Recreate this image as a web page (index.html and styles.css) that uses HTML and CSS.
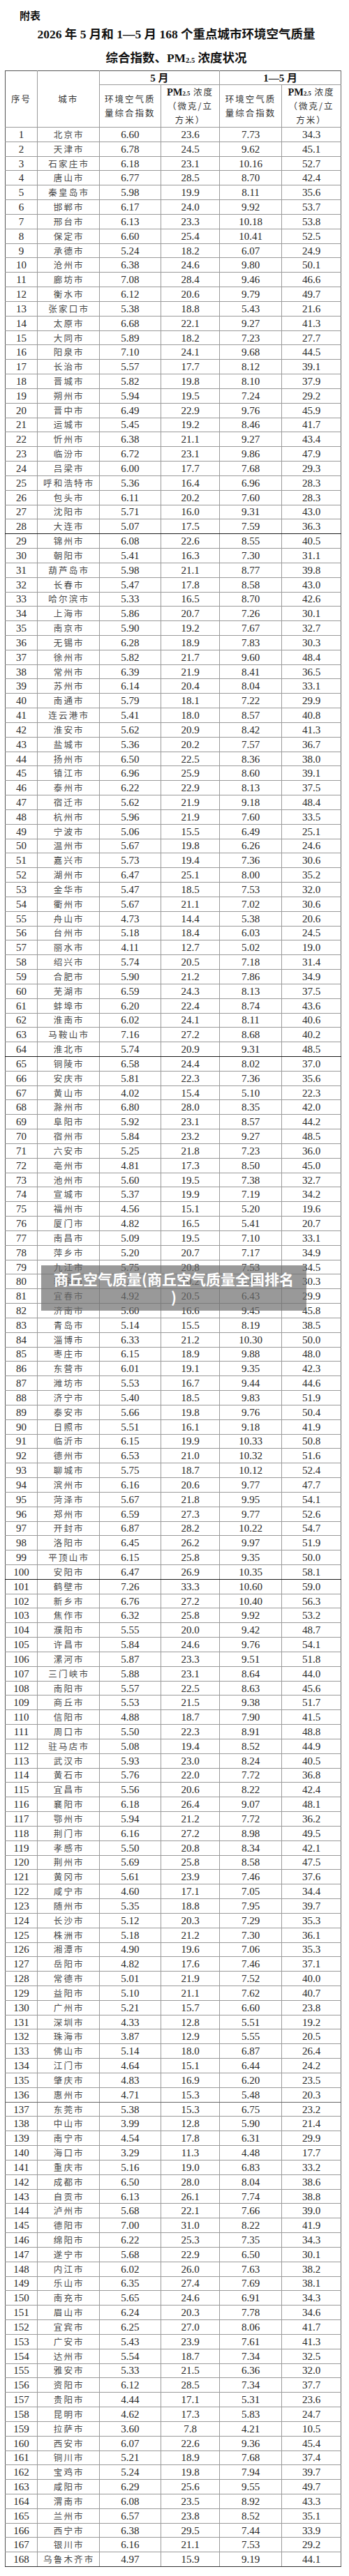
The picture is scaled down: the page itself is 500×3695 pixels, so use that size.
FILE: index.html
```html
<!DOCTYPE html>
<html lang="zh-CN">
<head>
<meta charset="utf-8">
<title>附表</title>
<link rel="stylesheet" href="styles.css">
</head>
<body>
<div class="doc">
<p class="label">附表</p>
<h1 class="title">2026 年 5 月和 1—5 月 168 个重点城市环境空气质量<br>综合指数、PM<span class="sub">2.5</span> 浓度状况</h1>
<table class="aq">
<colgroup><col class="c1"><col class="c2"><col class="c3"><col class="c4"><col class="c5"><col class="c6"></colgroup>
<thead>
<tr class="h1"><th rowspan="2" class="hz">序号</th><th rowspan="2" class="hz">城市</th><th colspan="2" class="hb">5 月</th><th colspan="2" class="hb">1—5 月</th></tr>
<tr class="h2"><th class="hz">环境空气质<br>量综合指数</th><th class="hz"><b class="pm">PM<span class="sub">2.5</span></b> 浓度<br>（微克/立<br>方米）</th><th class="hz">环境空气质<br>量综合指数</th><th class="hz"><b class="pm">PM<span class="sub">2.5</span></b> 浓度<br>（微克/立<br>方米）</th></tr>
</thead>
<tbody>
<tr><td>1</td><td class="ct">北京市</td><td>6.60</td><td>23.6</td><td>7.73</td><td>34.3</td></tr>
<tr><td>2</td><td class="ct">天津市</td><td>6.78</td><td>24.5</td><td>9.62</td><td>45.1</td></tr>
<tr><td>3</td><td class="ct">石家庄市</td><td>6.18</td><td>23.1</td><td>10.16</td><td>52.7</td></tr>
<tr><td>4</td><td class="ct">唐山市</td><td>6.77</td><td>28.5</td><td>8.70</td><td>42.4</td></tr>
<tr><td>5</td><td class="ct">秦皇岛市</td><td>5.98</td><td>19.9</td><td>8.11</td><td>35.6</td></tr>
<tr><td>6</td><td class="ct">邯郸市</td><td>6.17</td><td>24.0</td><td>9.92</td><td>53.7</td></tr>
<tr><td>7</td><td class="ct">邢台市</td><td>6.13</td><td>23.3</td><td>10.18</td><td>53.8</td></tr>
<tr><td>8</td><td class="ct">保定市</td><td>6.60</td><td>25.4</td><td>10.41</td><td>52.5</td></tr>
<tr><td>9</td><td class="ct">承德市</td><td>5.24</td><td>18.2</td><td>6.07</td><td>24.9</td></tr>
<tr><td>10</td><td class="ct">沧州市</td><td>6.38</td><td>24.6</td><td>9.80</td><td>50.1</td></tr>
<tr><td>11</td><td class="ct">廊坊市</td><td>7.08</td><td>28.4</td><td>9.46</td><td>46.6</td></tr>
<tr><td>12</td><td class="ct">衡水市</td><td>6.12</td><td>20.6</td><td>9.79</td><td>49.7</td></tr>
<tr><td>13</td><td class="ct">张家口市</td><td>5.38</td><td>18.8</td><td>5.43</td><td>21.6</td></tr>
<tr><td>14</td><td class="ct">太原市</td><td>6.68</td><td>22.1</td><td>9.27</td><td>41.3</td></tr>
<tr><td>15</td><td class="ct">大同市</td><td>5.89</td><td>18.2</td><td>7.23</td><td>27.7</td></tr>
<tr><td>16</td><td class="ct">阳泉市</td><td>7.10</td><td>24.1</td><td>9.68</td><td>44.5</td></tr>
<tr><td>17</td><td class="ct">长治市</td><td>5.57</td><td>17.7</td><td>8.12</td><td>39.1</td></tr>
<tr><td>18</td><td class="ct">晋城市</td><td>5.82</td><td>19.8</td><td>8.10</td><td>37.9</td></tr>
<tr><td>19</td><td class="ct">朔州市</td><td>5.94</td><td>19.5</td><td>7.24</td><td>29.2</td></tr>
<tr><td>20</td><td class="ct">晋中市</td><td>6.49</td><td>22.9</td><td>9.76</td><td>45.9</td></tr>
<tr><td>21</td><td class="ct">运城市</td><td>5.45</td><td>19.2</td><td>8.46</td><td>41.7</td></tr>
<tr><td>22</td><td class="ct">忻州市</td><td>6.38</td><td>21.1</td><td>9.27</td><td>43.4</td></tr>
<tr><td>23</td><td class="ct">临汾市</td><td>6.72</td><td>23.1</td><td>9.86</td><td>47.9</td></tr>
<tr><td>24</td><td class="ct">吕梁市</td><td>6.00</td><td>17.7</td><td>7.68</td><td>29.3</td></tr>
<tr><td>25</td><td class="ct">呼和浩特市</td><td>5.36</td><td>16.4</td><td>6.96</td><td>28.3</td></tr>
<tr><td>26</td><td class="ct">包头市</td><td>6.11</td><td>20.2</td><td>7.60</td><td>28.3</td></tr>
<tr><td>27</td><td class="ct">沈阳市</td><td>5.71</td><td>16.0</td><td>9.31</td><td>43.0</td></tr>
<tr class="dk"><td>28</td><td class="ct">大连市</td><td>5.07</td><td>17.5</td><td>7.59</td><td>36.3</td></tr>
<tr><td>29</td><td class="ct">锦州市</td><td>6.08</td><td>22.6</td><td>8.55</td><td>40.5</td></tr>
<tr><td>30</td><td class="ct">朝阳市</td><td>5.41</td><td>16.3</td><td>7.30</td><td>31.1</td></tr>
<tr><td>31</td><td class="ct">葫芦岛市</td><td>5.98</td><td>21.1</td><td>8.77</td><td>39.8</td></tr>
<tr><td>32</td><td class="ct">长春市</td><td>5.47</td><td>17.8</td><td>8.58</td><td>43.0</td></tr>
<tr><td>33</td><td class="ct">哈尔滨市</td><td>5.33</td><td>16.5</td><td>8.70</td><td>42.6</td></tr>
<tr><td>34</td><td class="ct">上海市</td><td>5.86</td><td>20.7</td><td>7.26</td><td>30.1</td></tr>
<tr><td>35</td><td class="ct">南京市</td><td>5.90</td><td>19.2</td><td>7.67</td><td>32.7</td></tr>
<tr><td>36</td><td class="ct">无锡市</td><td>6.28</td><td>18.9</td><td>7.83</td><td>30.3</td></tr>
<tr><td>37</td><td class="ct">徐州市</td><td>5.82</td><td>21.7</td><td>9.60</td><td>48.4</td></tr>
<tr><td>38</td><td class="ct">常州市</td><td>6.39</td><td>21.9</td><td>8.41</td><td>36.5</td></tr>
<tr><td>39</td><td class="ct">苏州市</td><td>6.14</td><td>20.4</td><td>8.04</td><td>33.1</td></tr>
<tr><td>40</td><td class="ct">南通市</td><td>5.79</td><td>18.1</td><td>7.22</td><td>29.9</td></tr>
<tr><td>41</td><td class="ct">连云港市</td><td>5.41</td><td>18.0</td><td>8.57</td><td>40.8</td></tr>
<tr><td>42</td><td class="ct">淮安市</td><td>5.62</td><td>20.9</td><td>8.42</td><td>41.3</td></tr>
<tr><td>43</td><td class="ct">盐城市</td><td>5.36</td><td>20.2</td><td>7.57</td><td>36.7</td></tr>
<tr><td>44</td><td class="ct">扬州市</td><td>6.50</td><td>22.5</td><td>8.36</td><td>38.0</td></tr>
<tr><td>45</td><td class="ct">镇江市</td><td>6.96</td><td>25.9</td><td>8.60</td><td>39.1</td></tr>
<tr><td>46</td><td class="ct">泰州市</td><td>6.22</td><td>22.9</td><td>8.13</td><td>37.5</td></tr>
<tr><td>47</td><td class="ct">宿迁市</td><td>5.62</td><td>21.9</td><td>9.18</td><td>48.4</td></tr>
<tr><td>48</td><td class="ct">杭州市</td><td>5.96</td><td>21.9</td><td>7.60</td><td>33.5</td></tr>
<tr><td>49</td><td class="ct">宁波市</td><td>5.06</td><td>15.5</td><td>6.49</td><td>25.1</td></tr>
<tr><td>50</td><td class="ct">温州市</td><td>5.67</td><td>19.8</td><td>6.26</td><td>24.6</td></tr>
<tr><td>51</td><td class="ct">嘉兴市</td><td>5.73</td><td>19.4</td><td>7.36</td><td>30.6</td></tr>
<tr><td>52</td><td class="ct">湖州市</td><td>6.47</td><td>25.1</td><td>8.00</td><td>35.2</td></tr>
<tr><td>53</td><td class="ct">金华市</td><td>5.47</td><td>18.5</td><td>7.53</td><td>32.0</td></tr>
<tr><td>54</td><td class="ct">衢州市</td><td>5.67</td><td>21.1</td><td>7.02</td><td>30.6</td></tr>
<tr><td>55</td><td class="ct">舟山市</td><td>4.73</td><td>14.4</td><td>5.38</td><td>20.6</td></tr>
<tr><td>56</td><td class="ct">台州市</td><td>5.18</td><td>18.4</td><td>6.03</td><td>24.5</td></tr>
<tr><td>57</td><td class="ct">丽水市</td><td>4.11</td><td>12.7</td><td>5.02</td><td>19.0</td></tr>
<tr><td>58</td><td class="ct">绍兴市</td><td>5.74</td><td>20.5</td><td>7.18</td><td>31.4</td></tr>
<tr><td>59</td><td class="ct">合肥市</td><td>5.90</td><td>21.2</td><td>7.86</td><td>34.9</td></tr>
<tr><td>60</td><td class="ct">芜湖市</td><td>6.59</td><td>24.3</td><td>8.13</td><td>37.5</td></tr>
<tr><td>61</td><td class="ct">蚌埠市</td><td>6.20</td><td>22.4</td><td>8.74</td><td>43.6</td></tr>
<tr><td>62</td><td class="ct">淮南市</td><td>6.02</td><td>24.1</td><td>8.11</td><td>40.6</td></tr>
<tr><td>63</td><td class="ct">马鞍山市</td><td>7.16</td><td>27.2</td><td>8.68</td><td>40.2</td></tr>
<tr class="dk"><td>64</td><td class="ct">淮北市</td><td>5.74</td><td>20.9</td><td>9.31</td><td>48.5</td></tr>
<tr><td>65</td><td class="ct">铜陵市</td><td>6.58</td><td>24.4</td><td>8.02</td><td>37.0</td></tr>
<tr><td>66</td><td class="ct">安庆市</td><td>5.81</td><td>22.3</td><td>7.36</td><td>35.6</td></tr>
<tr><td>67</td><td class="ct">黄山市</td><td>4.02</td><td>15.4</td><td>5.10</td><td>22.3</td></tr>
<tr><td>68</td><td class="ct">滁州市</td><td>6.80</td><td>28.0</td><td>8.35</td><td>42.0</td></tr>
<tr><td>69</td><td class="ct">阜阳市</td><td>5.92</td><td>23.1</td><td>8.57</td><td>44.2</td></tr>
<tr><td>70</td><td class="ct">宿州市</td><td>5.84</td><td>23.2</td><td>9.27</td><td>48.5</td></tr>
<tr><td>71</td><td class="ct">六安市</td><td>5.25</td><td>21.8</td><td>7.23</td><td>36.0</td></tr>
<tr><td>72</td><td class="ct">亳州市</td><td>4.81</td><td>17.3</td><td>8.50</td><td>45.0</td></tr>
<tr><td>73</td><td class="ct">池州市</td><td>5.60</td><td>19.5</td><td>7.38</td><td>32.7</td></tr>
<tr><td>74</td><td class="ct">宣城市</td><td>5.37</td><td>19.9</td><td>7.19</td><td>34.2</td></tr>
<tr><td>75</td><td class="ct">福州市</td><td>4.56</td><td>15.1</td><td>5.20</td><td>19.6</td></tr>
<tr><td>76</td><td class="ct">厦门市</td><td>4.82</td><td>16.5</td><td>5.41</td><td>20.7</td></tr>
<tr><td>77</td><td class="ct">南昌市</td><td>5.09</td><td>19.5</td><td>7.10</td><td>33.1</td></tr>
<tr><td>78</td><td class="ct">萍乡市</td><td>5.20</td><td>20.7</td><td>7.17</td><td>34.9</td></tr>
<tr><td>79</td><td class="ct">九江市</td><td>5.75</td><td>20.8</td><td>7.53</td><td>34.5</td></tr>
<tr><td>80</td><td class="ct">新余市</td><td>4.99</td><td>20.2</td><td>5.93</td><td>30.3</td></tr>
<tr><td>81</td><td class="ct">宜春市</td><td>4.92</td><td>20.5</td><td>6.43</td><td>29.9</td></tr>
<tr><td>82</td><td class="ct">济南市</td><td>5.60</td><td>16.6</td><td>9.45</td><td>45.8</td></tr>
<tr><td>83</td><td class="ct">青岛市</td><td>5.14</td><td>15.5</td><td>8.19</td><td>38.5</td></tr>
<tr><td>84</td><td class="ct">淄博市</td><td>6.33</td><td>21.2</td><td>10.30</td><td>50.0</td></tr>
<tr><td>85</td><td class="ct">枣庄市</td><td>6.15</td><td>18.9</td><td>9.88</td><td>48.0</td></tr>
<tr><td>86</td><td class="ct">东营市</td><td>6.01</td><td>19.1</td><td>9.35</td><td>42.3</td></tr>
<tr><td>87</td><td class="ct">潍坊市</td><td>5.53</td><td>16.7</td><td>9.44</td><td>44.6</td></tr>
<tr><td>88</td><td class="ct">济宁市</td><td>5.40</td><td>18.5</td><td>9.83</td><td>51.9</td></tr>
<tr><td>89</td><td class="ct">泰安市</td><td>5.66</td><td>19.8</td><td>9.76</td><td>50.4</td></tr>
<tr><td>90</td><td class="ct">日照市</td><td>5.51</td><td>16.1</td><td>9.18</td><td>41.9</td></tr>
<tr><td>91</td><td class="ct">临沂市</td><td>6.15</td><td>19.9</td><td>10.33</td><td>50.8</td></tr>
<tr><td>92</td><td class="ct">德州市</td><td>6.53</td><td>21.0</td><td>10.32</td><td>51.6</td></tr>
<tr><td>93</td><td class="ct">聊城市</td><td>5.75</td><td>18.7</td><td>10.12</td><td>52.4</td></tr>
<tr><td>94</td><td class="ct">滨州市</td><td>6.16</td><td>20.6</td><td>9.77</td><td>47.7</td></tr>
<tr><td>95</td><td class="ct">菏泽市</td><td>5.67</td><td>21.8</td><td>9.95</td><td>54.1</td></tr>
<tr><td>96</td><td class="ct">郑州市</td><td>6.59</td><td>27.3</td><td>9.77</td><td>52.6</td></tr>
<tr><td>97</td><td class="ct">开封市</td><td>6.87</td><td>28.2</td><td>10.22</td><td>54.7</td></tr>
<tr><td>98</td><td class="ct">洛阳市</td><td>6.45</td><td>26.2</td><td>9.97</td><td>51.9</td></tr>
<tr><td>99</td><td class="ct">平顶山市</td><td>6.15</td><td>25.8</td><td>9.35</td><td>50.0</td></tr>
<tr class="dk"><td>100</td><td class="ct">安阳市</td><td>6.47</td><td>26.9</td><td>10.35</td><td>58.1</td></tr>
<tr><td>101</td><td class="ct">鹤壁市</td><td>7.26</td><td>33.3</td><td>10.60</td><td>59.0</td></tr>
<tr><td>102</td><td class="ct">新乡市</td><td>6.76</td><td>27.2</td><td>10.40</td><td>56.3</td></tr>
<tr><td>103</td><td class="ct">焦作市</td><td>6.32</td><td>25.8</td><td>9.92</td><td>53.2</td></tr>
<tr><td>104</td><td class="ct">濮阳市</td><td>5.55</td><td>20.0</td><td>9.42</td><td>48.7</td></tr>
<tr><td>105</td><td class="ct">许昌市</td><td>5.84</td><td>24.6</td><td>9.76</td><td>54.1</td></tr>
<tr><td>106</td><td class="ct">漯河市</td><td>5.87</td><td>23.3</td><td>9.51</td><td>51.8</td></tr>
<tr><td>107</td><td class="ct">三门峡市</td><td>5.88</td><td>23.1</td><td>8.64</td><td>44.0</td></tr>
<tr><td>108</td><td class="ct">南阳市</td><td>5.57</td><td>22.5</td><td>8.63</td><td>45.6</td></tr>
<tr><td>109</td><td class="ct">商丘市</td><td>5.53</td><td>21.5</td><td>9.38</td><td>51.7</td></tr>
<tr><td>110</td><td class="ct">信阳市</td><td>4.88</td><td>18.7</td><td>7.90</td><td>41.5</td></tr>
<tr><td>111</td><td class="ct">周口市</td><td>5.50</td><td>22.3</td><td>8.91</td><td>48.8</td></tr>
<tr><td>112</td><td class="ct">驻马店市</td><td>5.08</td><td>19.4</td><td>8.52</td><td>44.9</td></tr>
<tr><td>113</td><td class="ct">武汉市</td><td>5.93</td><td>23.0</td><td>8.24</td><td>40.5</td></tr>
<tr><td>114</td><td class="ct">黄石市</td><td>5.76</td><td>22.0</td><td>7.72</td><td>36.8</td></tr>
<tr><td>115</td><td class="ct">宜昌市</td><td>5.56</td><td>20.6</td><td>8.22</td><td>42.4</td></tr>
<tr><td>116</td><td class="ct">襄阳市</td><td>6.18</td><td>26.4</td><td>9.07</td><td>48.1</td></tr>
<tr><td>117</td><td class="ct">鄂州市</td><td>5.94</td><td>21.2</td><td>7.72</td><td>36.2</td></tr>
<tr><td>118</td><td class="ct">荆门市</td><td>6.16</td><td>27.2</td><td>8.98</td><td>49.5</td></tr>
<tr><td>119</td><td class="ct">孝感市</td><td>5.50</td><td>20.8</td><td>8.34</td><td>42.1</td></tr>
<tr><td>120</td><td class="ct">荆州市</td><td>5.69</td><td>25.8</td><td>8.58</td><td>47.5</td></tr>
<tr><td>121</td><td class="ct">黄冈市</td><td>5.61</td><td>23.9</td><td>7.46</td><td>37.6</td></tr>
<tr><td>122</td><td class="ct">咸宁市</td><td>4.60</td><td>17.1</td><td>7.05</td><td>34.4</td></tr>
<tr><td>123</td><td class="ct">随州市</td><td>5.35</td><td>18.8</td><td>7.95</td><td>39.7</td></tr>
<tr><td>124</td><td class="ct">长沙市</td><td>5.12</td><td>20.3</td><td>7.29</td><td>35.3</td></tr>
<tr><td>125</td><td class="ct">株洲市</td><td>5.18</td><td>21.2</td><td>7.30</td><td>36.1</td></tr>
<tr><td>126</td><td class="ct">湘潭市</td><td>4.90</td><td>19.6</td><td>7.06</td><td>35.3</td></tr>
<tr><td>127</td><td class="ct">岳阳市</td><td>4.82</td><td>17.6</td><td>7.46</td><td>37.1</td></tr>
<tr><td>128</td><td class="ct">常德市</td><td>5.01</td><td>21.9</td><td>7.52</td><td>40.0</td></tr>
<tr><td>129</td><td class="ct">益阳市</td><td>5.10</td><td>21.1</td><td>7.62</td><td>40.7</td></tr>
<tr><td>130</td><td class="ct">广州市</td><td>5.21</td><td>15.7</td><td>6.60</td><td>23.8</td></tr>
<tr><td>131</td><td class="ct">深圳市</td><td>4.33</td><td>12.8</td><td>5.51</td><td>19.2</td></tr>
<tr><td>132</td><td class="ct">珠海市</td><td>3.87</td><td>12.9</td><td>5.55</td><td>20.5</td></tr>
<tr><td>133</td><td class="ct">佛山市</td><td>5.14</td><td>18.0</td><td>6.87</td><td>26.4</td></tr>
<tr><td>134</td><td class="ct">江门市</td><td>4.64</td><td>15.1</td><td>6.44</td><td>24.2</td></tr>
<tr><td>135</td><td class="ct">肇庆市</td><td>4.83</td><td>16.9</td><td>6.20</td><td>23.5</td></tr>
<tr class="dm"><td>136</td><td class="ct">惠州市</td><td>4.71</td><td>15.3</td><td>5.48</td><td>20.3</td></tr>
<tr><td>137</td><td class="ct">东莞市</td><td>5.38</td><td>15.3</td><td>6.75</td><td>23.2</td></tr>
<tr><td>138</td><td class="ct">中山市</td><td>3.99</td><td>12.8</td><td>5.90</td><td>21.4</td></tr>
<tr><td>139</td><td class="ct">南宁市</td><td>4.54</td><td>17.8</td><td>6.31</td><td>29.9</td></tr>
<tr><td>140</td><td class="ct">海口市</td><td>3.29</td><td>11.3</td><td>4.48</td><td>17.7</td></tr>
<tr><td>141</td><td class="ct">重庆市</td><td>5.16</td><td>19.0</td><td>6.83</td><td>33.2</td></tr>
<tr><td>142</td><td class="ct">成都市</td><td>6.50</td><td>28.0</td><td>8.04</td><td>38.6</td></tr>
<tr><td>143</td><td class="ct">自贡市</td><td>6.13</td><td>26.1</td><td>7.74</td><td>38.8</td></tr>
<tr><td>144</td><td class="ct">泸州市</td><td>5.68</td><td>22.1</td><td>7.66</td><td>39.0</td></tr>
<tr><td>145</td><td class="ct">德阳市</td><td>7.00</td><td>31.0</td><td>8.22</td><td>41.9</td></tr>
<tr><td>146</td><td class="ct">绵阳市</td><td>6.22</td><td>25.3</td><td>7.35</td><td>34.3</td></tr>
<tr><td>147</td><td class="ct">遂宁市</td><td>5.68</td><td>22.9</td><td>6.50</td><td>30.1</td></tr>
<tr><td>148</td><td class="ct">内江市</td><td>6.02</td><td>26.0</td><td>7.63</td><td>38.2</td></tr>
<tr><td>149</td><td class="ct">乐山市</td><td>6.35</td><td>27.4</td><td>7.69</td><td>38.1</td></tr>
<tr><td>150</td><td class="ct">南充市</td><td>5.65</td><td>24.6</td><td>6.91</td><td>34.3</td></tr>
<tr><td>151</td><td class="ct">眉山市</td><td>6.24</td><td>20.3</td><td>7.78</td><td>34.6</td></tr>
<tr><td>152</td><td class="ct">宜宾市</td><td>6.25</td><td>27.0</td><td>8.06</td><td>41.7</td></tr>
<tr><td>153</td><td class="ct">广安市</td><td>5.43</td><td>23.9</td><td>7.61</td><td>41.3</td></tr>
<tr><td>154</td><td class="ct">达州市</td><td>5.54</td><td>18.7</td><td>7.34</td><td>32.5</td></tr>
<tr><td>155</td><td class="ct">雅安市</td><td>5.33</td><td>21.5</td><td>6.36</td><td>32.0</td></tr>
<tr><td>156</td><td class="ct">资阳市</td><td>6.12</td><td>28.5</td><td>7.34</td><td>37.7</td></tr>
<tr><td>157</td><td class="ct">贵阳市</td><td>4.44</td><td>17.1</td><td>5.31</td><td>23.6</td></tr>
<tr><td>158</td><td class="ct">昆明市</td><td>4.62</td><td>17.3</td><td>5.83</td><td>24.7</td></tr>
<tr><td>159</td><td class="ct">拉萨市</td><td>3.60</td><td>7.8</td><td>4.21</td><td>10.5</td></tr>
<tr><td>160</td><td class="ct">西安市</td><td>6.07</td><td>22.6</td><td>9.36</td><td>45.4</td></tr>
<tr><td>161</td><td class="ct">铜川市</td><td>5.21</td><td>18.9</td><td>7.68</td><td>37.4</td></tr>
<tr><td>162</td><td class="ct">宝鸡市</td><td>5.24</td><td>19.8</td><td>7.94</td><td>39.7</td></tr>
<tr><td>163</td><td class="ct">咸阳市</td><td>6.29</td><td>25.6</td><td>9.55</td><td>49.7</td></tr>
<tr><td>164</td><td class="ct">渭南市</td><td>6.08</td><td>23.5</td><td>8.92</td><td>43.3</td></tr>
<tr><td>165</td><td class="ct">兰州市</td><td>6.57</td><td>23.8</td><td>8.52</td><td>35.1</td></tr>
<tr><td>166</td><td class="ct">西宁市</td><td>6.38</td><td>29.5</td><td>7.44</td><td>33.9</td></tr>
<tr><td>167</td><td class="ct">银川市</td><td>6.16</td><td>21.1</td><td>7.53</td><td>29.2</td></tr>
<tr class="last"><td>168</td><td class="ct">乌鲁木齐市</td><td>4.97</td><td>15.9</td><td>9.19</td><td>44.1</td></tr>
</tbody>
</table>
</div>
<div class="overlay">商丘空气质量(商丘空气质量全国排名<br>)</div>
</body>
</html>
```

FILE: styles.css
```css
html, body {
  margin: 0;
  padding: 0;
  background: #fff;
}
body {
  width: 500px;
  position: relative;
  font-family: "Liberation Serif", "Noto Sans CJK SC", serif;
  color: #222;
}
.doc {
  padding: 12px 12px 12px 7px;
}
.label {
  margin: 0 0 0 21px;
  font: 700 15px/20px "Noto Sans CJK SC", sans-serif;
  color: #111;
}
.title {
  margin: 0;
  width: 481px;
  box-sizing: border-box;
  padding-left: 10px;
  text-align: center;
  font-family: "Liberation Serif", "Noto Sans CJK SC", serif;
  font-weight: 700;
  font-size: 17.5px;
  line-height: 34px;
  color: #111;
}
.sub {
  font-size: 0.6em;
  line-height: 0;
  vertical-align: -0.05em;
}
.aq {
  border-collapse: collapse;
  table-layout: fixed;
  width: 481px;
  margin-top: 1px;
}
.c1 { width: 46px; }
.c2 { width: 88.5px; }
.c3 { width: 88.5px; }
.c4 { width: 84px; }
.c5 { width: 89px; }
.c6 { width: 85px; }
.aq th, .aq td {
  border: 1px solid #9a9a9a;
  padding: 0;
  text-align: center;
  vertical-align: middle;
  overflow: hidden;
  white-space: nowrap;
}
.aq thead tr:first-child th {
  border-top-color: #555;
}
.aq tr > :first-child {
  border-left-color: #555;
}
.aq tr > :last-child {
  border-right-color: #666;
}
.h1 { height: 20px; }
.h2 { height: 60px; }
.hz {
  font-family: "Noto Sans CJK SC", sans-serif;
  font-weight: 400;
  font-size: 12.5px;
  line-height: 20px;
  letter-spacing: 2px;
  padding-left: 2px;
  color: #333;
}
.hb {
  font-family: "Liberation Serif", "Noto Sans CJK SC", serif;
  font-weight: 700;
  font-size: 15px;
  line-height: 18px;
  color: #111;
}
.pm {
  font-family: "Liberation Serif", serif;
  font-weight: 700;
  font-size: 14.5px;
  letter-spacing: 0;
  color: #111;
}
.aq tbody tr {
  height: 20.84px;
}
.aq tbody td {
  font-size: 15px;
  line-height: 16px;
  color: #262626;
}
.aq tbody td.ct {
  font-family: "Noto Sans CJK SC", sans-serif;
  font-size: 12.5px;
  letter-spacing: 2.2px;
  padding-left: 2px;
  color: #4a4a4a;
}
.aq tr.dk td { border-bottom-color: #1a1a1a; }
.aq tr.dm td { border-bottom-color: #666; }
.aq tr.last td { border-bottom-color: #333; }
.overlay {
  position: absolute;
  left: 59px;
  top: 1815px;
  width: 380px;
  height: 65px;
  box-sizing: border-box;
  padding-top: 6px;
  background: rgba(110, 110, 110, 0.7);
  color: #fff;
  text-align: center;
  font-family: "Noto Sans CJK SC", sans-serif;
  font-weight: 700;
  font-size: 21px;
  line-height: 26px;
  white-space: nowrap;
}
```
